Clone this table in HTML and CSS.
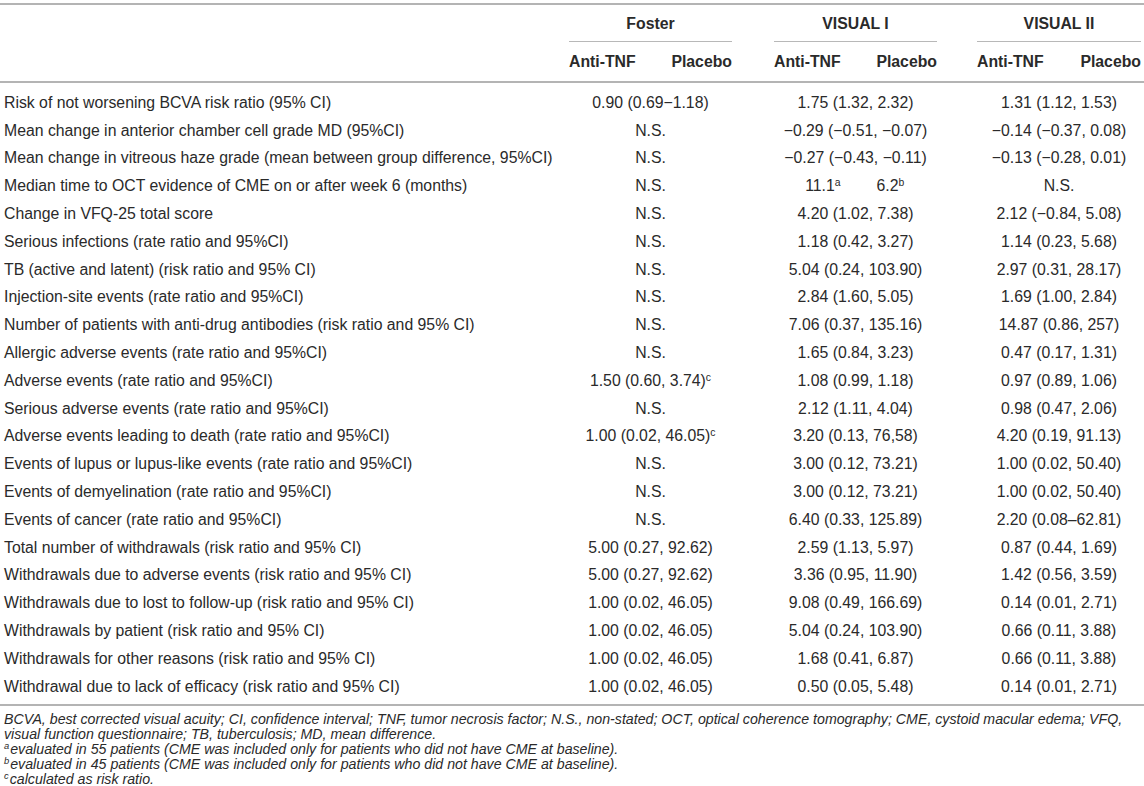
FILE: index.html
```html
<!DOCTYPE html>
<html lang="en">
<head>
<meta charset="utf-8">
<title>Anti-TNF trials table</title>
<link rel="stylesheet" href="styles.css">
</head>
<body>
<div class="table">
  <div class="row head1">
    <div class="label"></div>
    <div class="grp g1 study">Foster</div>
    <div class="grp g2 study">VISUAL I</div>
    <div class="grp g3 study">VISUAL II</div>
  </div>
  <div class="row head2">
    <div class="label"></div>
    <div class="grp g1 arms"><span>Anti-TNF</span><span>Placebo</span></div>
    <div class="grp g2 arms"><span>Anti-TNF</span><span>Placebo</span></div>
    <div class="grp g3 arms"><span>Anti-TNF</span><span>Placebo</span></div>
  </div>
  <div class="body">
    <div class="row"><div class="label">Risk of not worsening BCVA risk ratio (95% CI)</div><div class="grp g1">0.90 (0.69−1.18)</div><div class="grp g2">1.75 (1.32, 2.32)</div><div class="grp g3">1.31 (1.12, 1.53)</div></div>
    <div class="row"><div class="label">Mean change in anterior chamber cell grade MD (95%CI)</div><div class="grp g1">N.S.</div><div class="grp g2">−0.29 (−0.51, −0.07)</div><div class="grp g3">−0.14 (−0.37, 0.08)</div></div>
    <div class="row"><div class="label">Mean change in vitreous haze grade (mean between group difference, 95%CI)</div><div class="grp g1">N.S.</div><div class="grp g2">−0.27 (−0.43, −0.11)</div><div class="grp g3">−0.13 (−0.28, 0.01)</div></div>
    <div class="row"><div class="label">Median time to OCT evidence of CME on or after week 6 (months)</div><div class="grp g1">N.S.</div><div class="grp g2 split"><span class="l">11.1<sup>a</sup></span><span class="r">6.2<sup>b</sup></span></div><div class="grp g3">N.S.</div></div>
    <div class="row"><div class="label">Change in VFQ-25 total score</div><div class="grp g1">N.S.</div><div class="grp g2">4.20 (1.02, 7.38)</div><div class="grp g3">2.12 (−0.84, 5.08)</div></div>
    <div class="row"><div class="label">Serious infections (rate ratio and 95%CI)</div><div class="grp g1">N.S.</div><div class="grp g2">1.18 (0.42, 3.27)</div><div class="grp g3">1.14 (0.23, 5.68)</div></div>
    <div class="row"><div class="label">TB (active and latent) (risk ratio and 95% CI)</div><div class="grp g1">N.S.</div><div class="grp g2">5.04 (0.24, 103.90)</div><div class="grp g3">2.97 (0.31, 28.17)</div></div>
    <div class="row"><div class="label">Injection-site events (rate ratio and 95%CI)</div><div class="grp g1">N.S.</div><div class="grp g2">2.84 (1.60, 5.05)</div><div class="grp g3">1.69 (1.00, 2.84)</div></div>
    <div class="row"><div class="label">Number of patients with anti-drug antibodies (risk ratio and 95% CI)</div><div class="grp g1">N.S.</div><div class="grp g2">7.06 (0.37, 135.16)</div><div class="grp g3">14.87 (0.86, 257)</div></div>
    <div class="row"><div class="label">Allergic adverse events (rate ratio and 95%CI)</div><div class="grp g1">N.S.</div><div class="grp g2">1.65 (0.84, 3.23)</div><div class="grp g3">0.47 (0.17, 1.31)</div></div>
    <div class="row"><div class="label">Adverse events (rate ratio and 95%CI)</div><div class="grp g1">1.50 (0.60, 3.74)<sup>c</sup></div><div class="grp g2">1.08 (0.99, 1.18)</div><div class="grp g3">0.97 (0.89, 1.06)</div></div>
    <div class="row"><div class="label">Serious adverse events (rate ratio and 95%CI)</div><div class="grp g1">N.S.</div><div class="grp g2">2.12 (1.11, 4.04)</div><div class="grp g3">0.98 (0.47, 2.06)</div></div>
    <div class="row"><div class="label">Adverse events leading to death (rate ratio and 95%CI)</div><div class="grp g1">1.00 (0.02, 46.05)<sup>c</sup></div><div class="grp g2">3.20 (0.13, 76,58)</div><div class="grp g3">4.20 (0.19, 91.13)</div></div>
    <div class="row"><div class="label">Events of lupus or lupus-like events (rate ratio and 95%CI)</div><div class="grp g1">N.S.</div><div class="grp g2">3.00 (0.12, 73.21)</div><div class="grp g3">1.00 (0.02, 50.40)</div></div>
    <div class="row"><div class="label">Events of demyelination (rate ratio and 95%CI)</div><div class="grp g1">N.S.</div><div class="grp g2">3.00 (0.12, 73.21)</div><div class="grp g3">1.00 (0.02, 50.40)</div></div>
    <div class="row"><div class="label">Events of cancer (rate ratio and 95%CI)</div><div class="grp g1">N.S.</div><div class="grp g2">6.40 (0.33, 125.89)</div><div class="grp g3">2.20 (0.08–62.81)</div></div>
    <div class="row"><div class="label">Total number of withdrawals (risk ratio and 95% CI)</div><div class="grp g1">5.00 (0.27, 92.62)</div><div class="grp g2">2.59 (1.13, 5.97)</div><div class="grp g3">0.87 (0.44, 1.69)</div></div>
    <div class="row"><div class="label">Withdrawals due to adverse events (risk ratio and 95% CI)</div><div class="grp g1">5.00 (0.27, 92.62)</div><div class="grp g2">3.36 (0.95, 11.90)</div><div class="grp g3">1.42 (0.56, 3.59)</div></div>
    <div class="row"><div class="label">Withdrawals due to lost to follow-up (risk ratio and 95% CI)</div><div class="grp g1">1.00 (0.02, 46.05)</div><div class="grp g2">9.08 (0.49, 166.69)</div><div class="grp g3">0.14 (0.01, 2.71)</div></div>
    <div class="row"><div class="label">Withdrawals by patient (risk ratio and 95% CI)</div><div class="grp g1">1.00 (0.02, 46.05)</div><div class="grp g2">5.04 (0.24, 103.90)</div><div class="grp g3">0.66 (0.11, 3.88)</div></div>
    <div class="row"><div class="label">Withdrawals for other reasons (risk ratio and 95% CI)</div><div class="grp g1">1.00 (0.02, 46.05)</div><div class="grp g2">1.68 (0.41, 6.87)</div><div class="grp g3">0.66 (0.11, 3.88)</div></div>
    <div class="row"><div class="label">Withdrawal due to lack of efficacy (risk ratio and 95% CI)</div><div class="grp g1">1.00 (0.02, 46.05)</div><div class="grp g2">0.50 (0.05, 5.48)</div><div class="grp g3">0.14 (0.01, 2.71)</div></div>
  </div>
</div>
<div class="notes">
  <p>BCVA, best corrected visual acuity; CI, confidence interval; TNF, tumor necrosis factor; N.S., non-stated; OCT, optical coherence tomography; CME, cystoid macular edema; VFQ, visual function questionnaire; TB, tuberculosis; MD, mean difference.</p>
  <p><sup>a</sup>evaluated in 55 patients (CME was included only for patients who did not have CME at baseline).</p>
  <p><sup>b</sup>evaluated in 45 patients (CME was included only for patients who did not have CME at baseline).</p>
  <p><sup>c</sup>calculated as risk ratio.</p>
</div>
</body>
</html>
```
FILE: styles.css
```css
html, body {
  margin: 0;
  padding: 0;
  background: #ffffff;
}
body {
  font-family: "Liberation Sans", Arial, Helvetica, sans-serif;
  color: #2a2a2a;
  width: 1144px;
}
.table {
  margin-top: 3px;
  border-top: 2px solid #b4b4b4;
  border-bottom: 2px solid #b4b4b4;
}
.row {
  display: grid;
  grid-template-columns: 569px 163px 42px 163px 40px 164px 3px;
  align-items: center;
}
.label {
  grid-column: 1;
  padding-left: 4px;
  font-size: 15.8px;
  white-space: nowrap;
}
.grp {
  text-align: center;
  font-size: 15.8px;
  white-space: nowrap;
}
.g1 { grid-column: 2; }
.g2 { grid-column: 4; }
.g3 { grid-column: 6; }

.head1 {
  height: 37px;
}
.study {
  align-self: stretch;
  display: flex;
  align-items: center;
  justify-content: center;
  font-weight: bold;
  font-size: 15.8px;
  border-bottom: 1px solid #b8b8b8;
  padding-top: 2px;
}
.head2 {
  height: 39px;
  border-bottom: 2px solid #b4b4b4;
}
.arms {
  display: flex;
  justify-content: space-between;
  font-weight: bold;
  font-size: 15.8px;
  padding-top: 1px;
}
.body {
  padding-top: 6px;
  padding-bottom: 3px;
}
.body .row {
  height: 27.8px;
}
.split {
  display: grid;
  grid-template-columns: 1fr 1fr;
}
.split .l {
  text-align: right;
  padding-right: 15px;
}
.split .r {
  text-align: left;
  padding-left: 21px;
}
sup {
  font-size: 0.66em;
  line-height: 0;
  vertical-align: 0.45em;
}
.notes {
  padding: 6px 4px 0 4px;
  font-style: italic;
  font-size: 14.2px;
  line-height: 15px;
}
.notes p {
  margin: 0;
}
.notes sup {
  margin-right: 1px;
}
```
